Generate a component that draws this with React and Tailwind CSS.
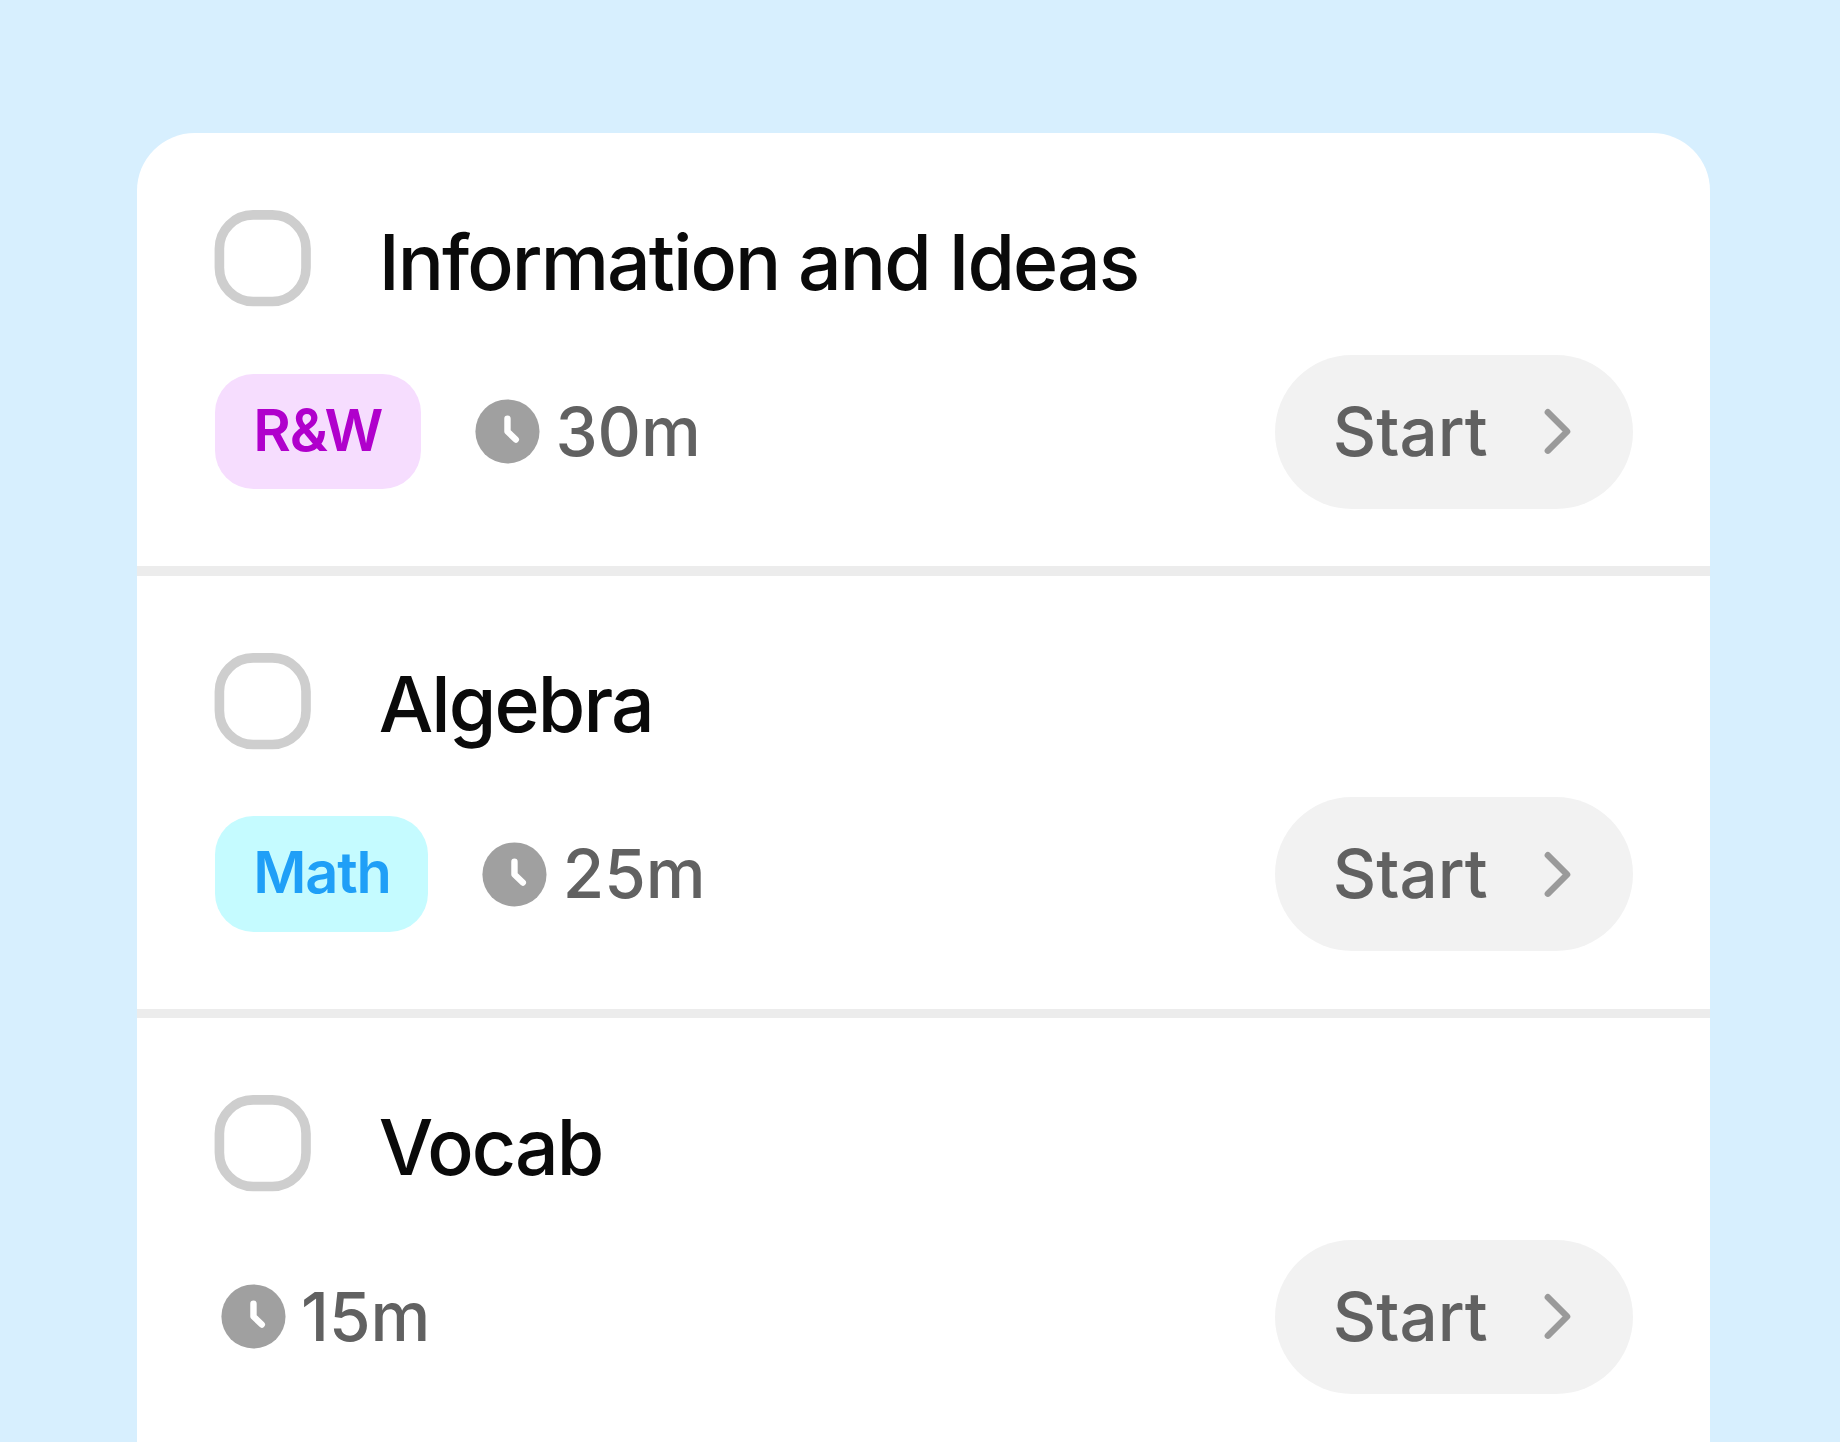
const tasks = [
    {title: "Information and Ideas", tag: "R&W", tagStyle: "bg-[#f6ddfe] text-[#b000cc]", tagWidth: "w-[206.3px]", time: "30m"},
    {title: "Algebra", tag: "Math", tagStyle: "bg-[#c5fbff] text-[#1f9ff7]", tagWidth: "w-[213.7px]", time: "25m"},
    {title: "Vocab", time: "15m"},
]

function ClockIcon() {
    return (
        <svg viewBox="0 0 24 24" className="w-[76.95px] h-[76.95px] shrink-0">
            <circle cx="12" cy="12" r="10" fill="#a0a0a0"/>
            <path d="M12 8v4l2.6 2.5" fill="none" stroke="#fff" strokeWidth="2" strokeLinecap="round" strokeLinejoin="round"/>
        </svg>
    )
}

function ChevronIcon() {
    return (
        <svg viewBox="0 0 24 24" className="w-[76.95px] h-[76.95px] shrink-0">
            <path d="M9 18l6-6-6-6" fill="none" stroke="#9a9a9a" strokeWidth="2" strokeLinecap="round" strokeLinejoin="round"/>
        </svg>
    )
}

function CheckIcon() {
    return (
        <svg viewBox="0 0 97 97" className="w-[97px] h-[97px] overflow-visible">
            <rect x="4.4" y="4.9" width="86.6" height="86.6" rx="33.7" fill="none" stroke="#cecece" strokeWidth="9.6"/>
        </svg>
    )
}

function Task({task}) {
    return (
        <li className="h-[442.5px] pt-[76.95px] pl-[77.3px] pr-[76.95px] relative group">
            <div className="flex items-start h-[96.5px]">
                <button aria-label={task.title} className="shrink-0">
                    <CheckIcon/>
                </button>
                <h2 className="ml-[67px] pt-[5.5px] h-[96.2px] leading-[93px] text-[76.95px] font-medium tracking-tight whitespace-nowrap text-[#0a0a0a]">{task.title}</h2>
            </div>

            <div className="flex items-center h-[153.9px] mt-[48px]">
                {task.tag && (
                    <span className={`h-[115.4px] mr-[48.1px] pl-[38.5px] rounded-[38.5px] leading-[112px] text-[57.7px] font-semibold tracking-[-0.02em] ${task.tagWidth} ${task.tagStyle}`}>
                        {task.tag}
                    </span>
                )}
                <ClockIcon/>
                <span className="ml-[9.4px] text-[67.3px] leading-[96px] font-medium text-[#616161]">{task.time}</span>

                <button className="ml-auto flex items-center justify-between w-[358px] h-[153.9px] pl-[57.7px] pr-[37px] rounded-full bg-[#f2f2f2]">
                    <span className="text-[67.3px] leading-[96px] font-medium text-[#616161]">Start</span>
                    <ChevronIcon/>
                </button>
            </div>

            <div className="absolute inset-x-0 bottom-0 h-[9.6px] bg-[#ececec] group-last:hidden"></div>
        </li>
    )
}

export default function App() {
    return (
        <main className="h-screen overflow-hidden bg-[#d7effe] pt-[133.3px] pl-[137.4px] font-['Inter',sans-serif]">
            <ul className="w-[1572.6px] h-[1400px] rounded-t-[57.7px] bg-white">
                {tasks.map((task) => <Task key={task.title} task={task}/>)}
            </ul>
        </main>
    )
}
